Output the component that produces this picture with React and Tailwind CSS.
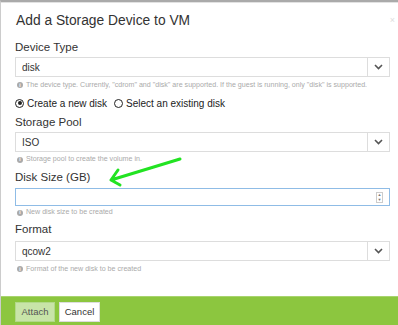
import React from 'react'

const font = { fontFamily: '"Liberation Sans", Arial, sans-serif' }

function Chevron() {
  return (
    <svg width="9" height="6" viewBox="0 0 9 6" fill="none">
      <path d="M1 1l3.5 3.5L8 1" stroke="#555" strokeWidth="1.6" />
    </svg>
  )
}

function Help({ children, h }) {
  return (
    <div className={`${h} flex items-center gap-[3px] pl-[2px] text-[7.1px] text-[#aaa]`}>
      <span className="flex h-[6px] w-[6px] items-center justify-center rounded-full bg-[#aaa] text-[5px] font-bold leading-none text-white">i</span>
      <span>{children}</span>
    </div>
  )
}

function Select({ value }) {
  return (
    <div className="flex h-[20px] border border-[#ddd] bg-white">
      <div className="flex flex-1 items-center pl-[6px] text-[10px] text-[#333]">{value}</div>
      <div className="flex w-[22px] items-center justify-center border-l border-[#ddd]">
        <Chevron />
      </div>
    </div>
  )
}

function Label({ children, h }) {
  return <div className={`${h} flex items-center text-[11.5px] text-[#333]`}>{children}</div>
}

export default function App() {
  return (
    <div style={font} className="relative flex h-[325px] w-[398px] flex-col overflow-hidden border-l border-t-2 border-l-[#ccc] border-t-[#aaa] bg-white">
      <div className="h-px bg-[#e2e2e2]" />
      <div className="flex h-[36px] items-center justify-between pl-[15px] pr-[3px]">
        <h1 className="text-[13.8px] text-[#333]">Add a Storage Device to VM</h1>
        <span className="text-[9px] text-[#ddd]">×</span>
      </div>

      <div className="flex flex-col pl-[14px] pr-[8px]">
        <Label h="h-[18px]">Device Type</Label>
        <Select value="disk" />
        <Help h="h-[16px]">The device type. Currently, "cdrom" and "disk" are supported. If the guest is running, only "disk" is supported.</Help>

        <div className="flex h-[20px] items-center gap-[7px] text-[10px] text-[#222]">
          <label className="flex items-center gap-[3px]">
            <span className="flex h-[9px] w-[9px] items-center justify-center rounded-full border-[1.5px] border-[#222]">
              <span className="h-[4px] w-[4px] rounded-full bg-[#222]" />
            </span>
            Create a new disk
          </label>
          <label className="flex items-center gap-[3px]">
            <span className="h-[9px] w-[9px] rounded-full border-[1.5px] border-[#222]" />
            Select an existing disk
          </label>
        </div>

        <Label h="h-[19px]">Storage Pool</Label>
        <Select value="ISO" />
        <Help h="h-[15px]">Storage pool to create the volume in.</Help>

        <Label h="h-[21px]">Disk Size (GB)</Label>
        <div className="flex h-[18px] items-center justify-end border border-[#8fbce6] bg-white pr-[6px]">
          <div className="flex h-[11px] w-[7px] flex-col items-center justify-center border border-[#ccc] text-[4px] leading-[5px] text-[#777]">
            <span>▲</span>
            <span>▼</span>
          </div>
        </div>
        <Help h="h-[13px]">New disk size to be created</Help>

        <Label h="h-[22px]">Format</Label>
        <Select value="qcow2" />
        <Help h="h-[16px]">Format of the new disk to be created</Help>
      </div>

      <div className="flex-1" />

      <div className="flex h-[29px] gap-[4px] border-t border-[#a8d46e] bg-[#8cc63f] pl-[14px] pt-[5px]">
        <button className="h-[20px] w-[40px] border border-[#b2d98a] bg-[#c8e4a8] text-[9.5px] text-[#555]">Attach</button>
        <button className="h-[20px] w-[41px] border border-[#ddd] bg-white text-[9.5px] text-[#333]">Cancel</button>
      </div>

      <svg className="absolute left-0 top-0" width="398" height="325" fill="none">
        <path d="M179 157L110 178M110 178L117 168M110 178L119 183" stroke="#22e322" strokeWidth="3" strokeLinecap="round" />
      </svg>
    </div>
  )
}
